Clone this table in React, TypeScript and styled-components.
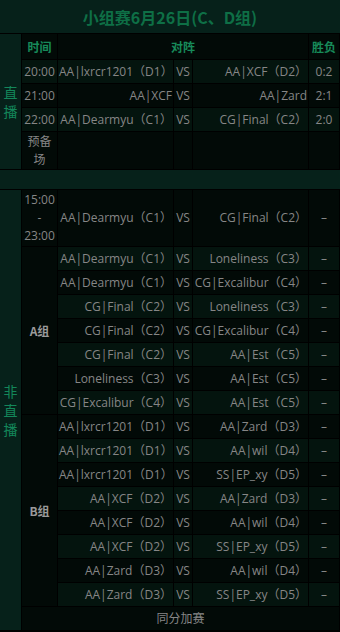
import React from 'react'
import styled, { createGlobalStyle } from 'styled-components'

const GlobalStyle = createGlobalStyle`
  html, body {
    margin: 0;
    background: #000;
  }
  body {
    font-family: "Open Sans", "Noto Sans CJK SC", sans-serif;
  }
`

const Table = styled.table`
  width: 340px;
  table-layout: fixed;
  border-collapse: separate;
  border-spacing: 0;
  font-size: 12px;
  color: #868686;
`

const Col = styled.col<{ $w: number }>`
  width: ${p => p.$w}px;
`

const Row = styled.tr<{ $h?: number; $light?: boolean }>`
  height: ${p => p.$h || 24}px;
  background: ${p => (p.$light ? '#04140e' : '#020a07')};
`

const Cell = styled.td<{ $align?: 'left' | 'right' | 'center'; $wrap?: boolean }>`
  box-sizing: border-box;
  padding: 0 1px;
  border-right: 1px solid #000;
  border-bottom: 1px solid #000;
  text-align: ${p => p.$align || 'center'};
  vertical-align: middle;
  line-height: 18px;
  white-space: ${p => (p.$wrap ? 'normal' : 'nowrap')};
  overflow: hidden;
`

const Title = styled.td`
  background: #06211a;
  border-bottom: 1px solid #000;
  text-align: center;
  color: #0e6f46;
  font-family: "Noto Sans CJK SC", sans-serif;
  font-size: 16px;
  font-weight: bold;
`

const Side = styled.td`
  background: #06211a;
  border-right: 1px solid #000;
  border-bottom: 1px solid #000;
  color: #13875a;
  font-family: "Noto Sans CJK SC", sans-serif;
  font-size: 14px;
  line-height: 19px;
  text-align: center;
  vertical-align: middle;
  padding: 0 3px;
`

const Head = styled.td`
  background: #020a07;
  border-right: 1px solid #000;
  border-bottom: 1px solid #000;
  color: #178a5a;
  font-family: "Noto Sans CJK SC", sans-serif;
  font-weight: bold;
  text-align: center;
  vertical-align: middle;
`

const Spacer = styled.td`
  background: #06211a;
  border-bottom: 1px solid #000;
`

const Group = styled(Cell)`
  background: #020a07;
  font-family: "Noto Sans CJK SC", sans-serif;
  font-weight: bold;
  color: #9a9a9a;
`

const live = [
  { time: '20:00', a: 'AA|lxrcr1201（D1）', b: 'AA|XCF（D2）', res: '0:2' },
  { time: '21:00', a: 'AA|XCF', b: 'AA|Zard', res: '2:1' },
  { time: '22:00', a: 'AA|Dearmyu（C1）', b: 'CG|Final（C2）', res: '2:0' },
]

const teams: Record<string, string> = {
  C1: 'AA|Dearmyu',
  C2: 'CG|Final',
  C3: 'Loneliness',
  C4: 'CG|Excalibur',
  C5: 'AA|Est',
  D1: 'AA|lxrcr1201',
  D2: 'AA|XCF',
  D3: 'AA|Zard',
  D4: 'AA|wil',
  D5: 'SS|EP_xy',
}

const pairs = [
  ['C1', 'C2'], ['C1', 'C3'], ['C1', 'C4'], ['C2', 'C3'],
  ['C2', 'C4'], ['C2', 'C5'], ['C3', 'C5'], ['C4', 'C5'],
  ['D1', 'D3'], ['D1', 'D4'], ['D1', 'D5'], ['D2', 'D3'],
  ['D2', 'D4'], ['D2', 'D5'], ['D3', 'D4'], ['D3', 'D5'],
]

const name = (id: string) => `${teams[id]}（${id}）`

export default function App() {
  return (
    <>
      <GlobalStyle />
      <Table>
        <colgroup>
          <Col $w={22} />
          <Col $w={36} />
          <Col $w={116} />
          <Col $w={19} />
          <Col $w={116} />
          <Col $w={31} />
        </colgroup>
        <tbody>
          <Row $h={34}>
            <Title colSpan={6}>小组赛6月26日(C、D组)</Title>
          </Row>
          <Row $h={26}>
            <Side rowSpan={5}>直播</Side>
            <Head>时间</Head>
            <Head colSpan={3}>对阵</Head>
            <Head>胜负</Head>
          </Row>
          {live.map((m, i) => (
            <Row key={m.time} $light={i % 2 === 0}>
              <Cell>{m.time}</Cell>
              <Cell $align="right">{m.a}</Cell>
              <Cell>VS</Cell>
              <Cell $align="right">{m.b}</Cell>
              <Cell>{m.res}</Cell>
            </Row>
          ))}
          <Row $h={38}>
            <Cell $wrap>预备场</Cell>
            <Cell />
            <Cell />
            <Cell />
            <Cell />
          </Row>
          <Row $h={20}>
            <Spacer colSpan={6} />
          </Row>
          {pairs.map(([a, b], i) => (
            <Row key={a + b} $h={i === 0 ? 57 : 24} $light={i % 2 === 1}>
              {i === 0 && <Side rowSpan={17}>非直播</Side>}
              {i === 0 && <Cell $wrap>15:00 - 23:00</Cell>}
              {i === 1 && <Group rowSpan={7}>A组</Group>}
              {i === 8 && <Group rowSpan={8}>B组</Group>}
              <Cell $align="right">{name(a)}</Cell>
              <Cell>VS</Cell>
              <Cell $align="right">{name(b)}</Cell>
              <Cell>–</Cell>
            </Row>
          ))}
          <Row>
            <Cell colSpan={5}>同分加赛</Cell>
          </Row>
        </tbody>
      </Table>
    </>
  )
}
